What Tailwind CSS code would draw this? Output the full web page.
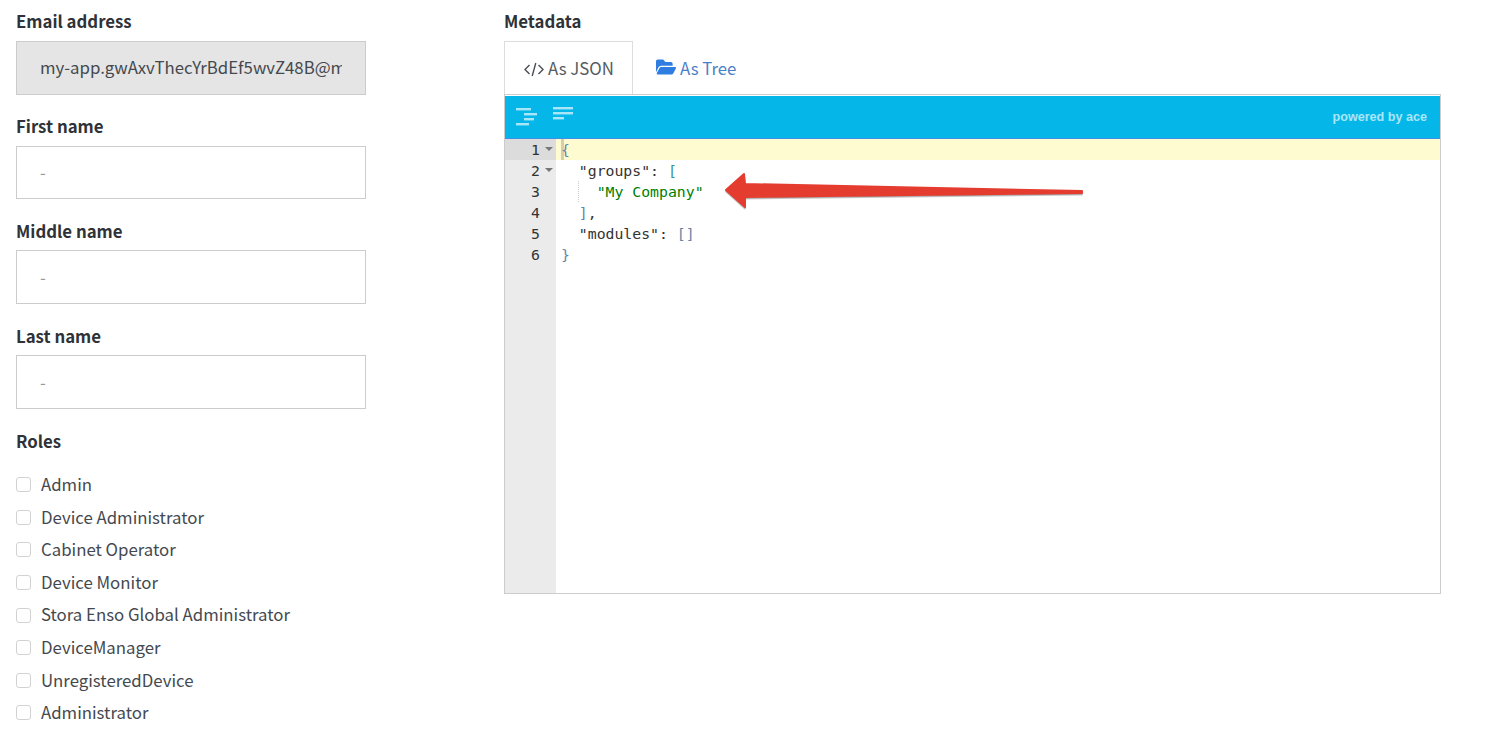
<!DOCTYPE html>
<html lang="en">
<head>
<meta charset="utf-8">
<title>User</title>
<script src="https://cdn.jsdelivr.net/npm/@tailwindcss/browser@4"></script>
</head>
<body class="bg-white h-[738px] overflow-hidden font-['Noto_Sans_CJK_SC','Noto_Sans',sans-serif] text-[#3a3f44]">
<div class="flex pl-4 items-start">
  <div class="w-[350px] shrink-0 flex flex-col pt-[9px]">
    <label class="h-[24px] leading-[24px] text-[16.8px] font-bold text-[#2f3337]">Email address</label>
    <div class="mt-[8px] h-[54px] border border-[#cccccc] bg-[#e5e5e5] px-[23px] leading-[50px] text-[16.8px] text-[#44494f]"><div class="overflow-hidden whitespace-nowrap">my-app.gwAxvThecYrBdEf5wvZ48B@my-company.com</div></div>
    <label class="mt-[19px] h-[24px] leading-[24px] text-[16.8px] font-bold text-[#2f3337]">First name</label>
    <div class="mt-[8px] h-[53px] border border-[#cccccc] pl-[23px] leading-[51px] text-[16.8px] text-[#999999]">-</div>
    <label class="mt-[20px] h-[24px] leading-[24px] text-[16.8px] font-bold text-[#2f3337]">Middle name</label>
    <div class="mt-[7px] h-[54px] border border-[#cccccc] pl-[23px] leading-[52px] text-[16.8px] text-[#999999]">-</div>
    <label class="mt-[20px] h-[24px] leading-[24px] text-[16.8px] font-bold text-[#2f3337]">Last name</label>
    <div class="mt-[7px] h-[54px] border border-[#cccccc] pl-[23px] leading-[52px] text-[16.8px] text-[#999999]">-</div>
    <label class="mt-[20px] h-[24px] leading-[24px] text-[16.8px] font-bold text-[#2f3337]">Roles</label>
    <ul class="mt-[15.4px] flex flex-col text-[16.8px] text-[#44494f]">
      <li class="h-[32.6px] flex items-center gap-[10px]"><span class="w-[15px] h-[15px] rounded-[3px] border border-[#d2d2d2] bg-white shrink-0"></span>Admin</li>
      <li class="h-[32.6px] flex items-center gap-[10px]"><span class="w-[15px] h-[15px] rounded-[3px] border border-[#d2d2d2] bg-white shrink-0"></span>Device Administrator</li>
      <li class="h-[32.6px] flex items-center gap-[10px]"><span class="w-[15px] h-[15px] rounded-[3px] border border-[#d2d2d2] bg-white shrink-0"></span>Cabinet Operator</li>
      <li class="h-[32.6px] flex items-center gap-[10px]"><span class="w-[15px] h-[15px] rounded-[3px] border border-[#d2d2d2] bg-white shrink-0"></span>Device Monitor</li>
      <li class="h-[32.6px] flex items-center gap-[10px]"><span class="w-[15px] h-[15px] rounded-[3px] border border-[#d2d2d2] bg-white shrink-0"></span>Stora Enso Global Administrator</li>
      <li class="h-[32.6px] flex items-center gap-[10px]"><span class="w-[15px] h-[15px] rounded-[3px] border border-[#d2d2d2] bg-white shrink-0"></span>DeviceManager</li>
      <li class="h-[32.6px] flex items-center gap-[10px]"><span class="w-[15px] h-[15px] rounded-[3px] border border-[#d2d2d2] bg-white shrink-0"></span>UnregisteredDevice</li>
      <li class="h-[32.6px] flex items-center gap-[10px]"><span class="w-[15px] h-[15px] rounded-[3px] border border-[#d2d2d2] bg-white shrink-0"></span>Administrator</li>
    </ul>
  </div>
  <div class="ml-[138px] w-[937px] shrink-0 flex flex-col pt-[9px]">
    <label class="h-[24px] leading-[24px] text-[16.8px] font-bold text-[#2f3337]">Metadata</label>
    <div class="mt-[8px] flex h-[53px] text-[16.8px]">
      <div class="w-[129px] h-[53px] border border-b-0 border-[#dddddd] bg-white z-10 flex items-center gap-[4px] pl-[19px] pt-[2px] text-[#555b61]">
        <svg class="w-[20px] h-[15px]" viewBox="0 0 20 15" fill="none" stroke="#4a4f55" stroke-width="1.4"><path d="M5.5 3 1 7.5 5.5 12M14.5 3 19 7.5 14.5 12M11.8 1 8.2 14"/></svg>
        <span>As JSON</span>
      </div>
      <div class="flex items-center gap-[4px] pl-[23px] pt-[2px] text-[#4d7fc9]">
        <svg class="w-[20px] h-[20px] -mt-[4px]" viewBox="0 0 576 512" preserveAspectRatio="none" fill="#2f7de1"><path d="M572.694 292.093L500.27 416.248A63.997 63.997 0 0 1 444.989 448H45.025c-18.523 0-30.064-20.093-20.731-36.093l72.424-124.155A64 64 0 0 1 152 256h399.964c18.523 0 30.064 20.093 20.73 36.093zM152 224h328v-48c0-26.51-21.49-48-48-48H272l-64-64H48C21.49 64 0 85.49 0 112v278.046l69.077-118.418C86.214 242.25 117.989 224 152 224z"/></svg>
        <span>As Tree</span>
      </div>
    </div>
    <div class="h-[500px] border border-[#cccccc] pt-[1px] flex flex-col">
      <div class="h-[43px] bg-[#05b7e9] border-b border-[#3f8fe6] flex items-center justify-between shrink-0 pl-[11px] pr-[13px]">
        <div class="flex items-start gap-[16px] -mt-[1px]">
          <svg class="w-[21px] h-[20px] mt-[2px]" viewBox="0 0 21 20" fill="#a9e6f8"><rect x="0" y="0" width="15" height="2.4"/><rect x="8" y="5" width="13" height="2.4"/><rect x="8" y="10" width="10" height="2.4"/><rect x="0" y="15" width="13" height="2.4"/></svg>
          <svg class="w-[21px] h-[14px] mt-[1px]" viewBox="0 0 21 14" fill="#a9e6f8"><rect x="0" y="0" width="20" height="2.4"/><rect x="0" y="5" width="20" height="2.4"/><rect x="0" y="10" width="11" height="2.4"/></svg>
        </div>
        <span class="font-['Liberation_Sans',sans-serif] font-bold text-[12.6px] text-[#a9e6f8]">powered by ace</span>
      </div>
      <div class="flex flex-1 font-['DejaVu_Sans_Mono',monospace] text-[14.8px] leading-[21px] min-h-0">
        <div class="w-[51px] bg-[#ebebeb] text-[#333333] text-right shrink-0">
          <div class="h-[21px] bg-[#dcdcdc] pr-[16px] relative">1<span class="absolute right-[3px] top-[8px] border-x-[4px] border-x-transparent border-t-[4px] border-t-[#777777]"></span></div>
          <div class="h-[21px] pr-[16px] relative">2<span class="absolute right-[3px] top-[8px] border-x-[4px] border-x-transparent border-t-[4px] border-t-[#777777]"></span></div>
          <div class="h-[21px] pr-[16px]">3</div>
          <div class="h-[21px] pr-[16px]">4</div>
          <div class="h-[21px] pr-[16px]">5</div>
          <div class="h-[21px] pr-[16px]">6</div>
        </div>
        <pre class="flex-1 font-['DejaVu_Sans_Mono',monospace] text-[#333333] relative"><div class="h-[21px] bg-[#fffbd1] pl-[5px] relative"><span class="absolute left-[5px] top-0 w-[3px] h-[21px] bg-[#d8cfa8]"></span><span class="relative text-[#5f86a8]">{</span></div><div class="h-[21px] pl-[5px]">  <span>"groups"</span>: <span class="text-[#3a8f9a]">[</span></div><div class="h-[21px] pl-[5px] relative"><span class="absolute left-[22px] top-0 h-[21px] border-l border-dotted border-[#cccccc]"></span>    <span class="text-[#008000]">"My Company"</span></div><div class="h-[21px] pl-[5px]">  <span class="text-[#5f86a8]">]</span>,</div><div class="h-[21px] pl-[5px]">  <span>"modules"</span>: <span class="text-[#5f86a8]">[]</span></div><div class="h-[21px] pl-[5px]"><span class="text-[#5f86a8]">}</span></div></pre>
      </div>
    </div>
  </div>
</div>
<svg class="absolute left-0 top-0 pointer-events-none" width="1496" height="738" viewBox="0 0 1496 738">
  <path d="M726 190 744 174 745 184 1082 191 1082 193 745 197 745 207Z" fill="#000" fill-opacity=".22" stroke="#000" stroke-opacity=".22" stroke-width="2" stroke-linejoin="round" transform="translate(0 1.5)"/>
  <path d="M726 190 744 174 745 184 1082 191 1082 193 745 197 745 207Z" fill="#e53c30" stroke="#e53c30" stroke-width="2" stroke-linejoin="round"/>
</svg>
</body>
</html>
